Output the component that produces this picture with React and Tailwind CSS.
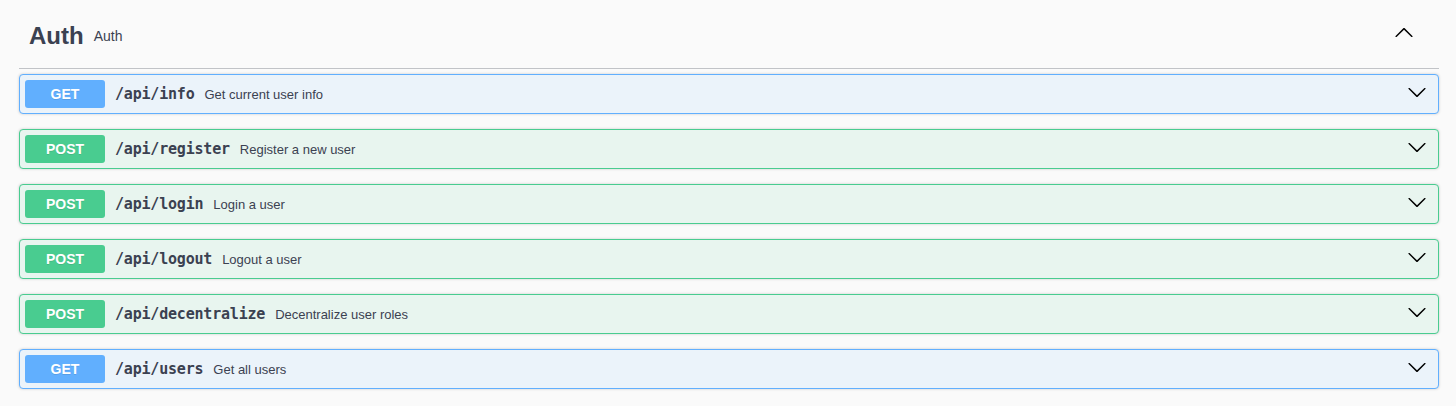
import React from 'react';

// Endpoints shown in the Auth tag group
const ENDPOINTS = [
  { method: 'GET', path: '/api/info', summary: 'Get current user info' },
  { method: 'POST', path: '/api/register', summary: 'Register a new user' },
  { method: 'POST', path: '/api/login', summary: 'Login a user' },
  { method: 'POST', path: '/api/logout', summary: 'Logout a user' },
  { method: 'POST', path: '/api/decentralize', summary: 'Decentralize user roles' },
  { method: 'GET', path: '/api/users', summary: 'Get all users' },
];

const METHOD_STYLES = {
  GET: {
    block: 'bg-[#ebf3fa] border-[#61affe]',
    badge: 'bg-[#61affe]',
  },
  POST: {
    block: 'bg-[#e8f5ef] border-[#49cc90]',
    badge: 'bg-[#49cc90]',
  },
};

function ArrowUp() {
  return (
    <svg width="20" height="20" viewBox="0 0 20 20" className="fill-current text-black">
      <path d="M 17.418 14.908 C 17.69 15.176 18.127 15.176 18.397 14.908 C 18.667 14.64 18.668 14.207 18.397 13.939 L 10.489 6.109 C 10.219 5.841 9.782 5.841 9.51 6.109 L 1.602 13.939 C 1.332 14.207 1.332 14.64 1.602 14.908 C 1.873 15.176 2.311 15.176 2.581 14.908 L 10 7.767 L 17.418 14.908 Z" />
    </svg>
  );
}

function ArrowDown() {
  return (
    <svg width="20" height="20" viewBox="0 0 20 20" className="fill-current text-black">
      <path d="M17.418 6.109c.272-.268.709-.268.979 0s.271.701 0 .969l-7.908 7.83c-.27.268-.707.268-.979 0l-7.908-7.83c-.27-.268-.27-.701 0-.969.271-.268.709-.268.979 0L10 13.25l7.418-7.141z" />
    </svg>
  );
}

function Operation({ method, path, summary }) {
  const styles = METHOD_STYLES[method];
  return (
    <div
      className={`flex items-center p-[5px] mb-[15px] border rounded-[4px] shadow-[0_0_3px_rgba(0,0,0,0.19)] ${styles.block}`}
    >
      <span
        className={`w-[80px] h-[28px] leading-[28px] text-center rounded-[3px] text-white text-[14px] font-bold font-['Liberation_Sans',Arial,sans-serif] [text-shadow:0_1px_0_rgba(0,0,0,0.1)] ${styles.badge}`}
      >
        {method}
      </span>
      <span className="px-[10px] pt-[1px] text-[15px] tracking-[-0.2px] font-bold text-[#3b4151] font-['DejaVu_Sans_Mono',monospace]">
        {path}
      </span>
      <span className="flex-1 pt-[1px] text-[13px] text-[#3b4151] font-['Liberation_Sans',Arial,sans-serif]">
        {summary}
      </span>
      <span className="mr-[6px] mb-[5px] flex">
        <ArrowDown />
      </span>
    </div>
  );
}

export default function App() {
  return (
    <div className="min-h-[406px] bg-[#fafafa] pl-[19px] pr-[17px] font-['Liberation_Sans',Arial,sans-serif]">
      {/* Tag header */}
      <div className="flex items-start pt-[22px] pb-[18px] pl-[10px] pr-[25px] border-b border-[#c1c3c7] mb-[5px]">
        <div className="flex-1 flex items-center h-[28px] text-[#3b4151]">
          <span className="text-[24px] font-bold">Auth</span>
          <span className="px-[10px] text-[14px]">Auth</span>
        </div>
        <span className="flex h-[28px] items-center mt-[-4px]">
          <ArrowUp />
        </span>
      </div>

      {/* Operation list */}
      <div>
        {ENDPOINTS.map((op) => (
          <Operation key={op.path} {...op} />
        ))}
      </div>
    </div>
  );
}
